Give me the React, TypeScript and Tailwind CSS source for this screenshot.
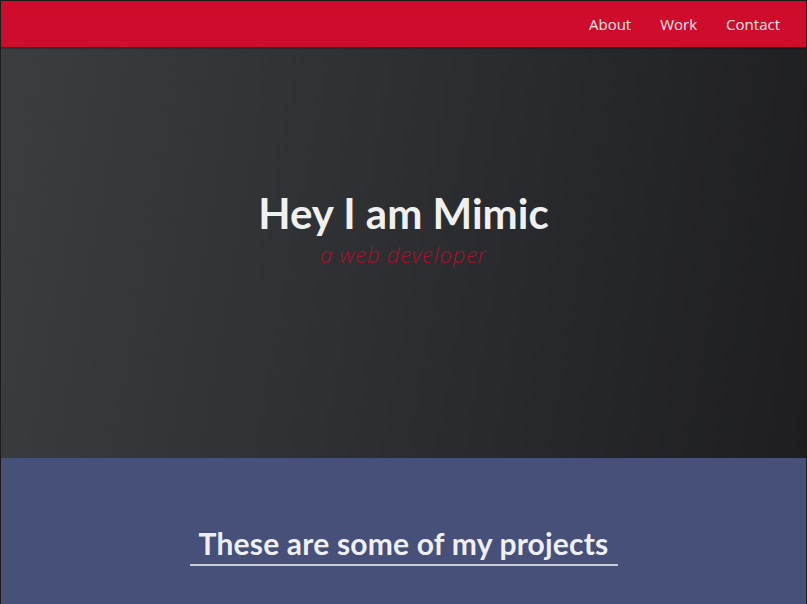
export default function App() {
  return (
    <div className="h-[604px] w-[807px] overflow-hidden border border-b-0 border-[#1c1c1c] bg-[#465079]">
      <nav className="relative z-10 flex h-[46px] items-center justify-end gap-[29px] bg-[#cf0c2b] pr-[26px] shadow-[0_1px_2px_rgba(0,0,0,0.6)] font-['Open_Sans',sans-serif] text-[15px] text-[#f3e6e8]">
        <a href="#about">About</a>
        <a href="#work">Work</a>
        <a href="#contact">Contact</a>
      </nav>
      <header className="flex h-[411px] flex-col items-center justify-center bg-[linear-gradient(100deg,#3a3e41,#1e1e21)] pb-[46px]">
        <h1 className="font-['Lato',sans-serif] text-[42px] font-bold leading-[44px] text-[#f0f0f0]">
          Hey I am Mimic
        </h1>
        <p className="mt-[5px] font-['Open_Sans',sans-serif] text-[22px] font-light italic leading-[28px] tracking-[0.8px] text-[#a8122d]">
          a web developer
        </p>
      </header>
      <section className="flex justify-center pt-[66px]">
        <h2 className="border-b-2 border-[#c9cbd6] px-[9px] pb-[2px] font-['Lato',sans-serif] text-[30px] font-bold leading-[38px] tracking-[0.2px] text-[#efeff3]">
          These are some of my projects
        </h2>
      </section>
    </div>
  );
}
